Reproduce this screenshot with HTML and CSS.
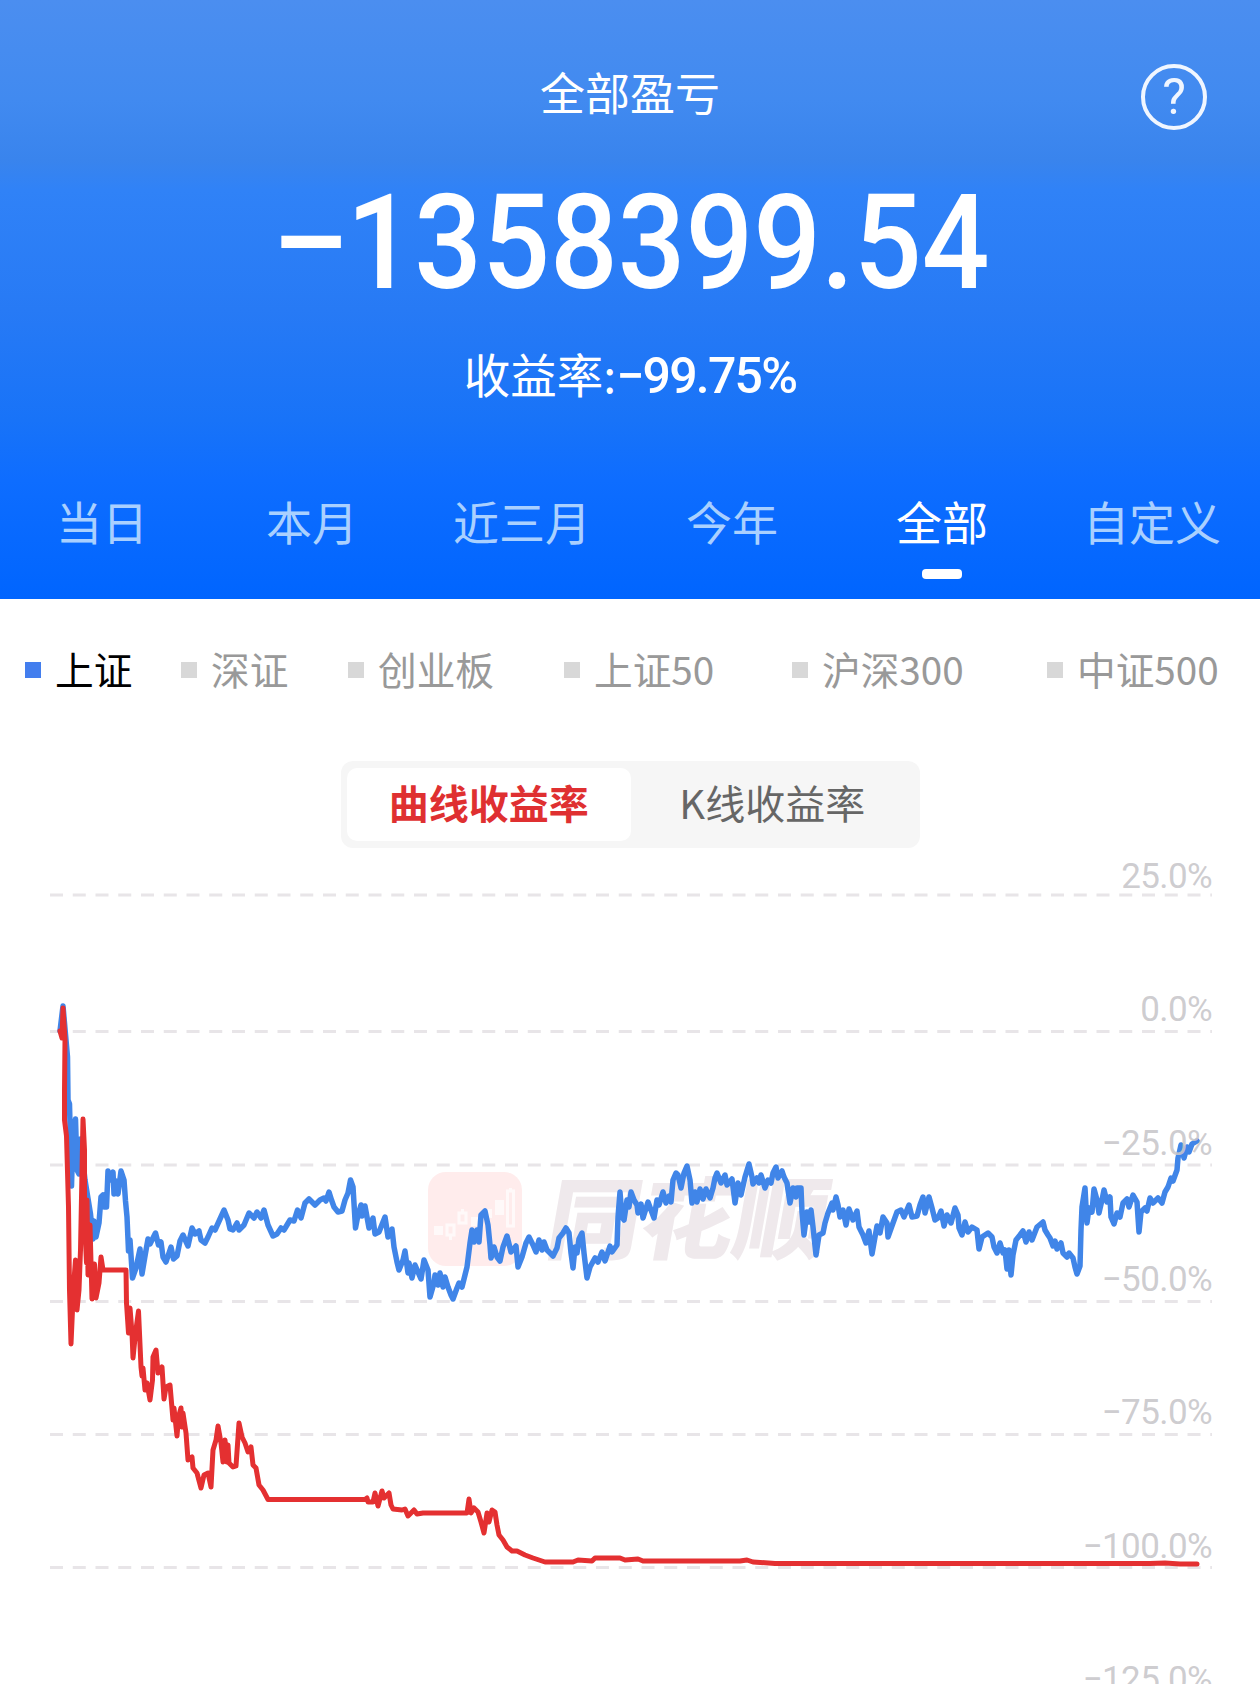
FILE: index.html
```html
<!DOCTYPE html>
<html lang="zh-CN">

<head>
    <meta charset="UTF-8">
    <meta name="viewport" content="width=device-width, initial-scale=1.0">
    <title>全部盈亏</title>
    <link rel="stylesheet" href="styles.css">
</head>

<body>
    <header class="summary">
        <div class="title-bar">
            <h1>全部盈亏</h1>
            <button class="help" type="button">?</button>
        </div>
        <div class="amount"><span class="minus">−</span>1358399.54</div>
        <div class="rate">收益率:<span>−99.75%</span></div>
        <nav class="tabs">
            <a>当日</a>
            <a>本月</a>
            <a>近三月</a>
            <a>今年</a>
            <a class="active">全部</a>
            <a>自定义</a>
        </nav>
    </header>

    <div class="legend">
        <span class="active">上证</span>
        <span>深证</span>
        <span>创业板</span>
        <span>上证50</span>
        <span>沪深300</span>
        <span>中证500</span>
    </div>

    <div class="switch">
        <button class="active" type="button">曲线收益率</button>
        <button type="button">K线收益率</button>
    </div>

    <svg class="chart" viewBox="0 848 1260 836">
        <!-- 网格线 -->
        <g class="grid">
            <path d="M50 895H1212M50 1031.5H1212M50 1165H1212M50 1301.5H1212M50 1434.5H1212M50 1567.5H1212" />
        </g>

        <!-- 水印 -->
        <g class="watermark">
            <rect class="logo" x="428" y="1172" width="94" height="94" rx="18" />
            <g class="candles">
                <path d="M434 1226h9v9h-9zM471 1217h8v9h-8zM484 1209h8v9h-8zM495 1200h9v15h-9z" />
                <path class="hollow" d="M447 1225h7v10h-7zM450.500 1235v5M459 1213h7v10h-7zM462.500 1209v4M507.500 1191h6v35h-6zM510.500 1188v3" />
            </g>
            <text x="0" y="0" transform="translate(543 1252) skewX(-10)" textLength="280" lengthAdjust="spacingAndGlyphs">同花顺</text>
        </g>

        <polyline class="line index" points="60,1031 63,1006 66,1040 67.500,1057 68,1100 69.500,1104 71.500,1186 73,1134 75.500,1119 77,1170 79,1174 80.500,1139 85,1180 90.500,1214 93,1239 94,1221 96,1237 99,1223 101,1197 103,1195 104,1207 106.500,1207 108,1171 110.500,1180 113,1172 114,1194 116,1181 118,1194 121,1171 124,1180 125.500,1201 127,1217 128.500,1251 130,1240 132.500,1278 136,1268 140,1249 142,1274 145,1256 148,1239 150,1244 155.500,1233 158.500,1245 161,1242 163,1257 166,1262 171,1247 173.500,1259 177,1256 180,1241 183,1235 188,1246 192,1228 195,1234 199,1231 201,1240 205,1243 208,1237 212,1228 215,1230 220,1219 224,1210 228,1220 230,1229 233,1230 237,1223 239,1230 244,1225 249,1213 254,1218 257,1212 261,1218 264,1210 268,1225 273,1236 277,1234 281,1228 284,1230 290,1220 294,1221 297.500,1210 301,1218 305,1203 309,1199 315,1205 320,1200 324,1198 326,1201 329,1192 331.500,1200 334,1207 338,1212 342,1211 345,1200 348,1193 350.500,1180 353,1187 355.500,1228 358,1215 361,1205 362,1216 365,1206 367,1217 369,1228 373,1218 375,1234 379,1232 385,1217 388,1237 392,1229 394,1247 397,1262 399,1270 403,1260 405,1251 408,1273 409,1263 412,1278 415,1265 421,1279 424,1260 428,1270 430,1297 434,1283 435,1275 438,1285 440,1273 443,1287 445,1277 448,1287 451,1295 453,1299 457,1288 459,1283 462,1287 465,1275 467,1267 470,1243 472,1230 474,1242 477,1230 479,1242 481,1215 485,1211 488,1225 490,1245 491,1258 494,1247 497,1257 500,1261 503,1247 507,1236 511,1252 516,1246 518,1267 522,1257 526,1243 529,1237 533,1245 536,1252 539,1240 542,1250 544,1242 547,1250 553,1256 557,1248 559,1238 563,1233 566,1228 569,1233 571,1253 573,1268 575,1247 577,1253 579,1239 582,1233 584,1253 587,1278 590,1267 595,1258 598,1262 602,1252 605,1261 610,1246 612,1252 617,1245 618,1217 620,1192 622,1217 624,1220 627,1200 629,1207 631,1192 634,1200 637,1205 638,1213 641,1204 643,1218 648,1202 651,1210 654,1218 657,1200 659,1205 663,1192 666,1203 669,1196 671,1202 673,1180 676,1173 678,1175 681,1188 684,1173 687,1166 690,1180 692,1203 695,1192 697,1202 700,1189 703,1199 706,1189 710,1198 713,1188 715,1178 717,1173 721,1183 725,1175 727,1185 732,1179 735,1203 738,1183 741,1195 745,1177 749,1164 752,1177 753,1184 757,1178 759,1183 761,1175 765,1188 768,1180 771,1183 773,1173 776,1167 778,1178 782,1171 784,1177 787,1183 790,1203 793,1188 796,1197 797,1188 801,1188 802,1212 804,1235 807,1212 809,1222 811,1210 813,1227 816,1255 819,1235 823,1233 825,1223 828,1213 832,1203 833,1210 836,1197 838,1205 840,1217 843,1210 846,1225 849,1209 853,1220 857,1211 859,1227 863,1235 866,1243 869,1231 872,1254 875,1237 877,1226 880,1233 883,1217 887,1223 888,1237 893,1223 897,1212 901,1210 904,1217 909,1205 912,1217 917,1216 920,1205 923,1197 925,1213 929,1197 932,1208 935,1220 938,1218 941,1211 944,1226 947,1215 951,1223 955,1208 958,1215 959,1228 962,1235 965,1222 968,1232 972,1227 977,1230 979,1249 982,1237 988,1233 992,1237 994,1247 997,1253 1000,1243 1003,1253 1005,1250 1007,1269 1009,1250 1011,1275 1013,1255 1016,1240 1020,1235 1023,1231 1026,1242 1029,1232 1032,1240 1037,1227 1043,1222 1045,1230 1048,1235 1050,1238 1053,1246 1055,1241 1057,1249 1061,1243 1063,1253 1067,1257 1069,1253 1073,1258 1075,1267 1077,1274 1080,1266 1081,1230 1082,1207 1085,1188 1086,1207 1087,1223 1089,1208 1092,1212 1094,1189 1097,1200 1099,1213 1102,1200 1104,1190 1107,1202 1110,1197 1111,1217 1114,1224 1117,1213 1120,1217 1123,1203 1127,1199 1129,1207 1133,1195 1137,1202 1139,1232 1141,1212 1145,1208 1147,1211 1150,1198 1153,1203 1158,1198 1162,1203 1165,1192 1168,1187 1171,1178 1173,1181 1177,1170 1178,1158 1181,1145 1184,1158 1187,1147 1189,1152 1192,1144 1197,1141" />

        <polyline class="line profit" points="60,1031 62,1038 63,1008 65,1040 64.500,1090 64.500,1120 66.500,1136 68.500,1207 69.500,1290 71,1344 72.500,1310 74,1280 75.500,1260 77,1310 79,1290 80.500,1250 83,1119 84.500,1150 84.500,1220 86.500,1263 87,1200 88,1275 90,1225 92,1299 94.500,1264 96,1298 99,1283 101,1257 103,1270 126,1270 126.500,1303 128.500,1333 130,1308 132,1333 133,1358 135.500,1333 138.500,1311 141,1367 142,1376 143,1368 145,1390 147,1383 150,1400 152.500,1380 153,1357 156,1350 158,1373 162,1367 164,1399 166,1387 170,1385 173,1420 174,1408 177,1436 178.500,1417 181,1408 181.500,1427 183,1413 186,1433 188,1460 192,1457 193,1468 197,1473 201,1488 204,1475 208,1473 211,1487 213,1450 216,1440 218,1426 221,1443 223,1462 225,1440 227,1462 228,1445 229,1463 233,1467 236,1466 239,1423 242,1437 245,1443 248,1452 251,1447 253,1465 256,1468 259,1485 263,1490 268,1499.500 365,1499.500 367,1498 368,1502 373,1502 375,1493 378,1506 382,1491 384,1498 389,1493 391,1505 393,1509 402,1510 405,1509 408,1516 414,1510 417,1514 423,1513 467,1513 469,1499 471,1513 474,1508 478,1512 481,1522 484,1533 487,1513 489,1522 492,1510 495,1512 497,1525 499,1535 503,1540 507,1547 512,1551 517,1551 525,1555 533,1558 545,1562 573,1562 578,1560 592,1561 595,1558 620,1558 625,1560 638,1559 643,1561 740,1561 747,1560 753,1562 775,1563.500 1150,1563.500 1165,1563 1180,1564 1197,1564" />

        <g class="labels">
            <text x="1212" y="888">25.0%</text>
            <text x="1212" y="1021">0.0%</text>
            <text x="1212" y="1155">−25.0%</text>
            <text x="1212" y="1291">−50.0%</text>
            <text x="1212" y="1424">−75.0%</text>
            <text x="1212" y="1558">−100.0%</text>
            <text x="1212" y="1691">−125.0%</text>
        </g>
    </svg>
</body>

</html>
```
FILE: styles.css
```css
* {
    box-sizing: border-box;
}

body {
    margin: 0;
    background: #fff;
    font-family: "Noto Sans CJK SC", sans-serif;
    height: 1684px;
    overflow: hidden;
}

button {
    font-family: inherit;
    border: none;
    padding: 0;
    background: none;
}

.summary {
    height: 599px;
    color: #fff;
    text-align: center;
    background: linear-gradient(#4b8ef0 0, #418af0 100px, #3984ed 160px, #3082f7 190px, #277af5 310px, #1873f8 420px, #0e6dff 480px, #0065ff 599px);
}

.title-bar {
    height: 160px;
    padding: 59px 53px 0 119px;
    display: flex;
    justify-content: space-between;
}

.title-bar h1 {
    flex: 1;
    margin: 0;
    font-size: 45px;
    font-weight: 400;
    line-height: 66px;
}

.help {
    width: 66px;
    height: 66px;
    margin-top: 5px;
    border: 4px solid #f0f6ff;
    border-radius: 50%;
    color: #f0f6ff;
    font: 50px/58px Roboto, sans-serif;
}

.amount {
    height: 160px;
    padding-top: 3px;
    font-family: Roboto, sans-serif;
    font-size: 131px;
    font-weight: 500;
    line-height: 160px;
    transform: scaleX(0.91);
}

.amount .minus {
    display: inline-block;
    margin-right: 10px;
    transform: scaleX(1.2);
    transform-origin: left;
}

.rate {
    height: 70px;
    margin-top: 18px;
    font-size: 46.500px;
    line-height: 70px;
}

.rate span {
    font-family: Roboto, sans-serif;
    font-size: 50px;
    font-weight: 500;
    letter-spacing: -1.800px;
}

.tabs {
    display: grid;
    grid-template-columns: repeat(6, 1fr);
    margin: 78px 3px 0 -3px;
}

.tabs a {
    display: flex;
    flex-direction: column;
    align-items: center;
    font-size: 46px;
    line-height: 68px;
    color: #a9d0ff;
}

.tabs .active {
    color: #fff;
}

.tabs .active::after {
    content: "";
    width: 40px;
    height: 10px;
    margin-top: 15px;
    border-radius: 4px;
    background: #fff;
}

.legend {
    display: grid;
    grid-template-columns: 156px 167px 216px 228px 255px auto;
    padding: 41px 0 0 25px;
    height: 162px;
}

.legend span {
    display: flex;
    align-items: center;
    gap: 14px;
    height: 56px;
    font-size: 38.700px;
    color: #999;
    white-space: nowrap;
}

.legend span::before {
    content: "";
    width: 16px;
    height: 16px;
    margin-top: 4px;
    background: #d8d8d8;
}

.legend .active {
    color: #000;
}

.legend .active::before {
    background: #437eee;
}

.switch {
    display: flex;
    width: 579px;
    height: 87px;
    margin-left: 341px;
    padding: 7px 6px;
    border-radius: 12px;
    background: #f6f6f6;
}

.switch button {
    flex: 1;
    padding-bottom: 6px;
    font-size: 40px;
    line-height: 60px;
    border-radius: 10px;
    color: #666;
}

.switch .active {
    background: #fff;
    color: #df3031;
    font-weight: 700;
}

.chart {
    display: block;
    width: 1260px;
    height: 836px;
}

.grid path {
    stroke: #e8e5e8;
    stroke-width: 3;
    stroke-dasharray: 13 9.750;
}

.logo {
    fill: #ffecec;
}

.candles {
    fill: #fff9f9;
}

.candles .hollow {
    fill: none;
    stroke: #fff9f9;
    stroke-width: 3;
}

.watermark text {
    font-size: 89px;
    font-weight: 900;
    fill: #efe9ec;
}

.line {
    fill: none;
    stroke-width: 5;
    stroke-linejoin: round;
    stroke-linecap: round;
}

.index {
    stroke: #4085e8;
    stroke-width: 5.500;
}

.profit {
    stroke: #e43031;
}

.labels text {
    font-family: Roboto, sans-serif;
    font-size: 35px;
    text-anchor: end;
    fill: #c8c6ca;
    fill-opacity: 0.9;
    letter-spacing: -0.600px;
}
```
